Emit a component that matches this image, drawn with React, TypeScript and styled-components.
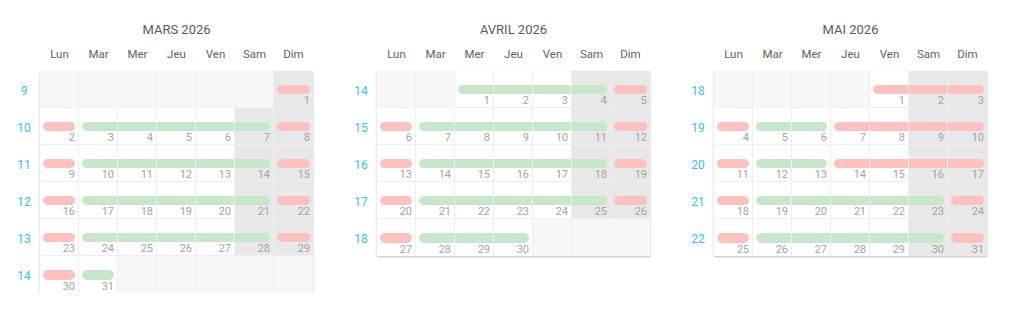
import React from "react";
import styled, { createGlobalStyle } from "styled-components";

const GlobalStyle = createGlobalStyle`
  html, body { margin: 0; padding: 0; background: #ffffff; }
  body { font-family: Roboto, "Noto Sans", Arial, sans-serif; }
`;

type Code = "" | "P" | "G";

interface MonthData {
  title: string;
  firstWeekday: number; // 0 = Monday
  weeks: { num: number; codes: Code[] }[];
}

const std: Code[] = ["P", "G", "G", "G", "G", "G", "P"];

const months: MonthData[] = [
  {
    title: "MARS 2026",
    firstWeekday: 6,
    weeks: [
      { num: 9, codes: ["", "", "", "", "", "", "P"] },
      { num: 10, codes: std },
      { num: 11, codes: std },
      { num: 12, codes: std },
      { num: 13, codes: std },
      { num: 14, codes: ["P", "G", "", "", "", "", ""] },
    ],
  },
  {
    title: "AVRIL 2026",
    firstWeekday: 2,
    weeks: [
      { num: 14, codes: ["", "", "G", "G", "G", "G", "P"] },
      { num: 15, codes: std },
      { num: 16, codes: std },
      { num: 17, codes: std },
      { num: 18, codes: ["P", "G", "G", "G", "", "", ""] },
    ],
  },
  {
    title: "MAI 2026",
    firstWeekday: 4,
    weeks: [
      { num: 18, codes: ["", "", "", "", "P", "P", "P"] },
      { num: 19, codes: ["P", "G", "G", "P", "P", "P", "P"] },
      { num: 20, codes: ["P", "G", "G", "P", "P", "P", "P"] },
      { num: 21, codes: std },
      { num: 22, codes: std },
    ],
  },
];

const dayNames = ["Lun", "Mar", "Mer", "Jeu", "Ven", "Sam", "Dim"];

const Page = styled.div`
  display: flex;
  gap: 34px;
  padding: 22px 0 0 10px;
`;

const Calendar = styled.section`
  width: 303px;
  display: flex;
  flex-direction: column;
`;

const Title = styled.div`
  margin-left: 30px;
  width: 273px;
  text-align: center;
  font-size: 13px;
  line-height: 16px;
  color: #5a5a5a;
`;

const DayHeader = styled.div`
  margin: 8px 0 0 30px;
  display: grid;
  grid-template-columns: repeat(7, 39px);
`;

const DayName = styled.div`
  text-align: center;
  font-size: 11.5px;
  line-height: 16px;
  color: #5f5f5f;
`;

const Body = styled.div`
  margin-top: 9px;
  display: grid;
  grid-template-columns: 30px 273px;
`;

const WeekLabels = styled.div`
  display: flex;
  flex-direction: column;
`;

const WeekLabel = styled.div`
  height: 37px;
  box-sizing: border-box;
  padding: 12px 2px 0 0;
  text-align: center;
  font-size: 12px;
  line-height: 16px;
  color: #3fbdd6;
`;

const Grid = styled.div`
  display: grid;
  grid-template-columns: repeat(7, 39px);
  grid-auto-rows: 37px;
  background: #ffffff;
  box-shadow: 0 1px 3px rgba(0, 0, 0, 0.18), 0 1px 1px rgba(0, 0, 0, 0.08);
  align-self: start;
`;

type CellKind = "out" | "weekend" | "normal";

const Cell = styled.div<{ $kind: CellKind; $lastCol: boolean; $lastRow: boolean }>`
  box-sizing: border-box;
  display: flex;
  flex-direction: column;
  padding-top: 14px;
  border-right: ${(p) => (p.$lastCol ? "none" : "1px solid #efefef")};
  border-bottom: ${(p) => (p.$lastRow ? "none" : "1px solid #efefef")};
  background: ${(p) =>
    p.$kind === "out" ? "#f7f7f7" : p.$kind === "weekend" ? "#e8e8e8" : "#ffffff"};
`;

const Bar = styled.div<{ $color: "P" | "G"; $start: boolean; $end: boolean }>`
  height: 10px;
  background: ${(p) => (p.$color === "P" ? "#ffc0c0" : "#c8e6c9")};
  margin-left: ${(p) => (p.$start ? "3px" : "0")};
  margin-right: ${(p) => (p.$end ? "3px" : "0")};
  border-radius: ${(p) =>
    `${p.$start ? "5px" : "0"} ${p.$end ? "5px" : "0"} ${p.$end ? "5px" : "0"} ${
      p.$start ? "5px" : "0"
    }`};
`;

const BarSpacer = styled.div`
  height: 10px;
`;

const DayNum = styled.div`
  margin-top: 1px;
  padding-right: 3px;
  text-align: right;
  font-size: 11px;
  line-height: 12px;
  color: #a3a3a3;
`;

function MonthView({ m }: { m: MonthData }) {
  let day = 0;
  return (
    <Calendar>
      <Title>{m.title}</Title>
      <DayHeader>
        {dayNames.map((d) => (
          <DayName key={d}>{d}</DayName>
        ))}
      </DayHeader>
      <Body>
        <WeekLabels>
          {m.weeks.map((w) => (
            <WeekLabel key={w.num}>{w.num}</WeekLabel>
          ))}
        </WeekLabels>
        <Grid>
          {m.weeks.map((w, wi) =>
            w.codes.map((c, ci) => {
              const lastCol = ci === 6;
              const lastRow = wi === m.weeks.length - 1;
              const inMonth = c !== "";
              if (inMonth) day += 1;
              const kind: CellKind = !inMonth ? "out" : ci >= 5 ? "weekend" : "normal";
              const start = ci === 0 || w.codes[ci - 1] !== c;
              const end = ci === 6 || w.codes[ci + 1] !== c;
              return (
                <Cell key={`${wi}-${ci}`} $kind={kind} $lastCol={lastCol} $lastRow={lastRow}>
                  {inMonth ? (
                    <>
                      <Bar $color={c as "P" | "G"} $start={start} $end={end} />
                      <DayNum>{day}</DayNum>
                    </>
                  ) : (
                    <BarSpacer />
                  )}
                </Cell>
              );
            })
          )}
        </Grid>
      </Body>
    </Calendar>
  );
}

export default function App() {
  return (
    <>
      <GlobalStyle />
      <Page>
        {months.map((m) => (
          <MonthView key={m.title} m={m} />
        ))}
      </Page>
    </>
  );
}
